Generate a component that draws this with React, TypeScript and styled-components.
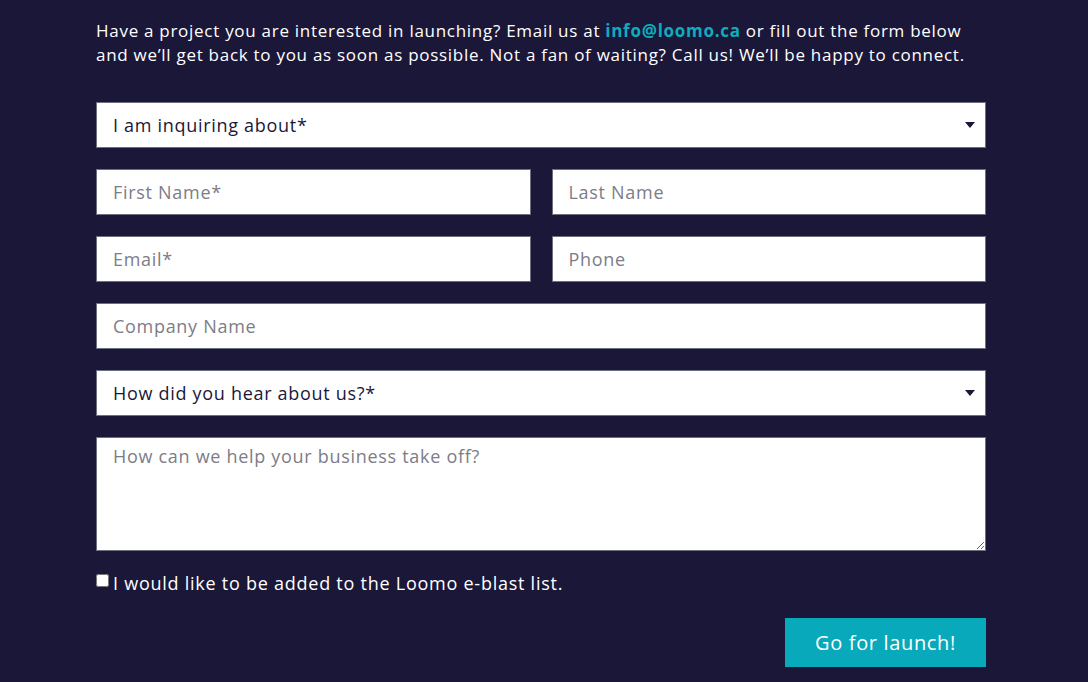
import * as React from 'react';
import styled, { createGlobalStyle } from 'styled-components';

const GlobalStyle = createGlobalStyle`
  html, body {
    margin: 0;
    padding: 0;
    background: #1b1739;
  }
  body {
    font-family: 'Open Sans', 'Liberation Sans', sans-serif;
  }
`;

const Page = styled.div`
  width: 1088px;
  height: 682px;
  overflow: hidden;
  background: #1b1739;
  padding: 19px 0 0 96px;
  box-sizing: border-box;
`;

const Form = styled.form`
  width: 890px;
  display: flex;
  flex-direction: column;
`;

const Intro = styled.p`
  margin: 0 0 35px;
  color: #ffffff;
  font-size: 17px;
  font-weight: 500;
  line-height: 24px;
  letter-spacing: 0.72px;
  white-space: nowrap;
`;

const Mail = styled.a`
  color: #0eacbc;
  font-weight: 700;
  text-decoration: none;
`;

const Fields = styled.div`
  display: grid;
  grid-template-columns: 1fr 1fr;
  column-gap: 21px;
  row-gap: 21px;
`;

const Cell = styled.div<{ $full?: boolean }>`
  grid-column: ${(p) => (p.$full ? '1 / -1' : 'auto')};
  position: relative;
`;

const fieldBase = `
  width: 100%;
  box-sizing: border-box;
  border: 1px solid #6b6f80;
  border-radius: 0;
  background: #ffffff;
  font-family: 'Open Sans', 'Liberation Sans', sans-serif;
  font-size: 18px;
  letter-spacing: 0.7px;
  color: #1b1739;
  padding: 0 16px;
  outline: none;
  &::placeholder {
    color: #7d7c88;
  }
`;

const Input = styled.input`
  ${fieldBase}
  height: 46px;
`;

const Select = styled.select`
  ${fieldBase}
  height: 46px;
  appearance: none;
  -webkit-appearance: none;
`;

const Caret = styled.span`
  position: absolute;
  right: 11px;
  top: 20px;
  width: 0;
  height: 0;
  border-left: 5px solid transparent;
  border-right: 5px solid transparent;
  border-top: 6px solid #1b1739;
  pointer-events: none;
`;

const TextArea = styled.textarea`
  ${fieldBase}
  height: 114px;
  padding-top: 6px;
  display: block;
  resize: vertical;
`;

const CheckRow = styled.label`
  margin-top: 20px;
  display: flex;
  align-items: center;
  gap: 4px;
  color: #ffffff;
  font-size: 18px;
  font-weight: 500;
  letter-spacing: 0.75px;
`;

const Check = styled.input`
  margin: 0;
  width: 13px;
  height: 13px;
  position: relative;
  top: -3px;
`;

const Actions = styled.div`
  display: flex;
  justify-content: flex-end;
  margin-top: 23px;
`;

const Button = styled.button`
  width: 201px;
  height: 49px;
  border: none;
  background: #08a9ba;
  color: #ffffff;
  font-family: 'Open Sans', 'Liberation Sans', sans-serif;
  font-size: 20px;
  font-weight: 500;
  letter-spacing: 0.65px;
  cursor: pointer;
`;

function Dropdown({ label }: { label: string }) {
  return (
    <Cell $full>
      <Select defaultValue="">
        <option value="">{label}</option>
      </Select>
      <Caret />
    </Cell>
  );
}

export default function App() {
  return (
    <Page>
      <GlobalStyle />
      <Form onSubmit={(e) => e.preventDefault()}>
        <Intro>
          Have a project you are interested in launching? Email us at{' '}
          <Mail href="#">info@loomo.ca</Mail> or fill out the form below
          <br />
          and we’ll get back to you as soon as possible. Not a fan of waiting?
          Call us! We’ll be happy to connect.
        </Intro>
        <Fields>
          <Dropdown label="I am inquiring about*" />
          <Cell>
            <Input placeholder="First Name*" />
          </Cell>
          <Cell>
            <Input placeholder="Last Name" />
          </Cell>
          <Cell>
            <Input placeholder="Email*" />
          </Cell>
          <Cell>
            <Input placeholder="Phone" />
          </Cell>
          <Cell $full>
            <Input placeholder="Company Name" />
          </Cell>
          <Dropdown label="How did you hear about us?*" />
          <Cell $full>
            <TextArea placeholder="How can we help your business take off?" />
          </Cell>
        </Fields>
        <CheckRow>
          <Check type="checkbox" />
          I would like to be added to the Loomo e-blast list.
        </CheckRow>
        <Actions>
          <Button type="submit">Go for launch!</Button>
        </Actions>
      </Form>
    </Page>
  );
}
